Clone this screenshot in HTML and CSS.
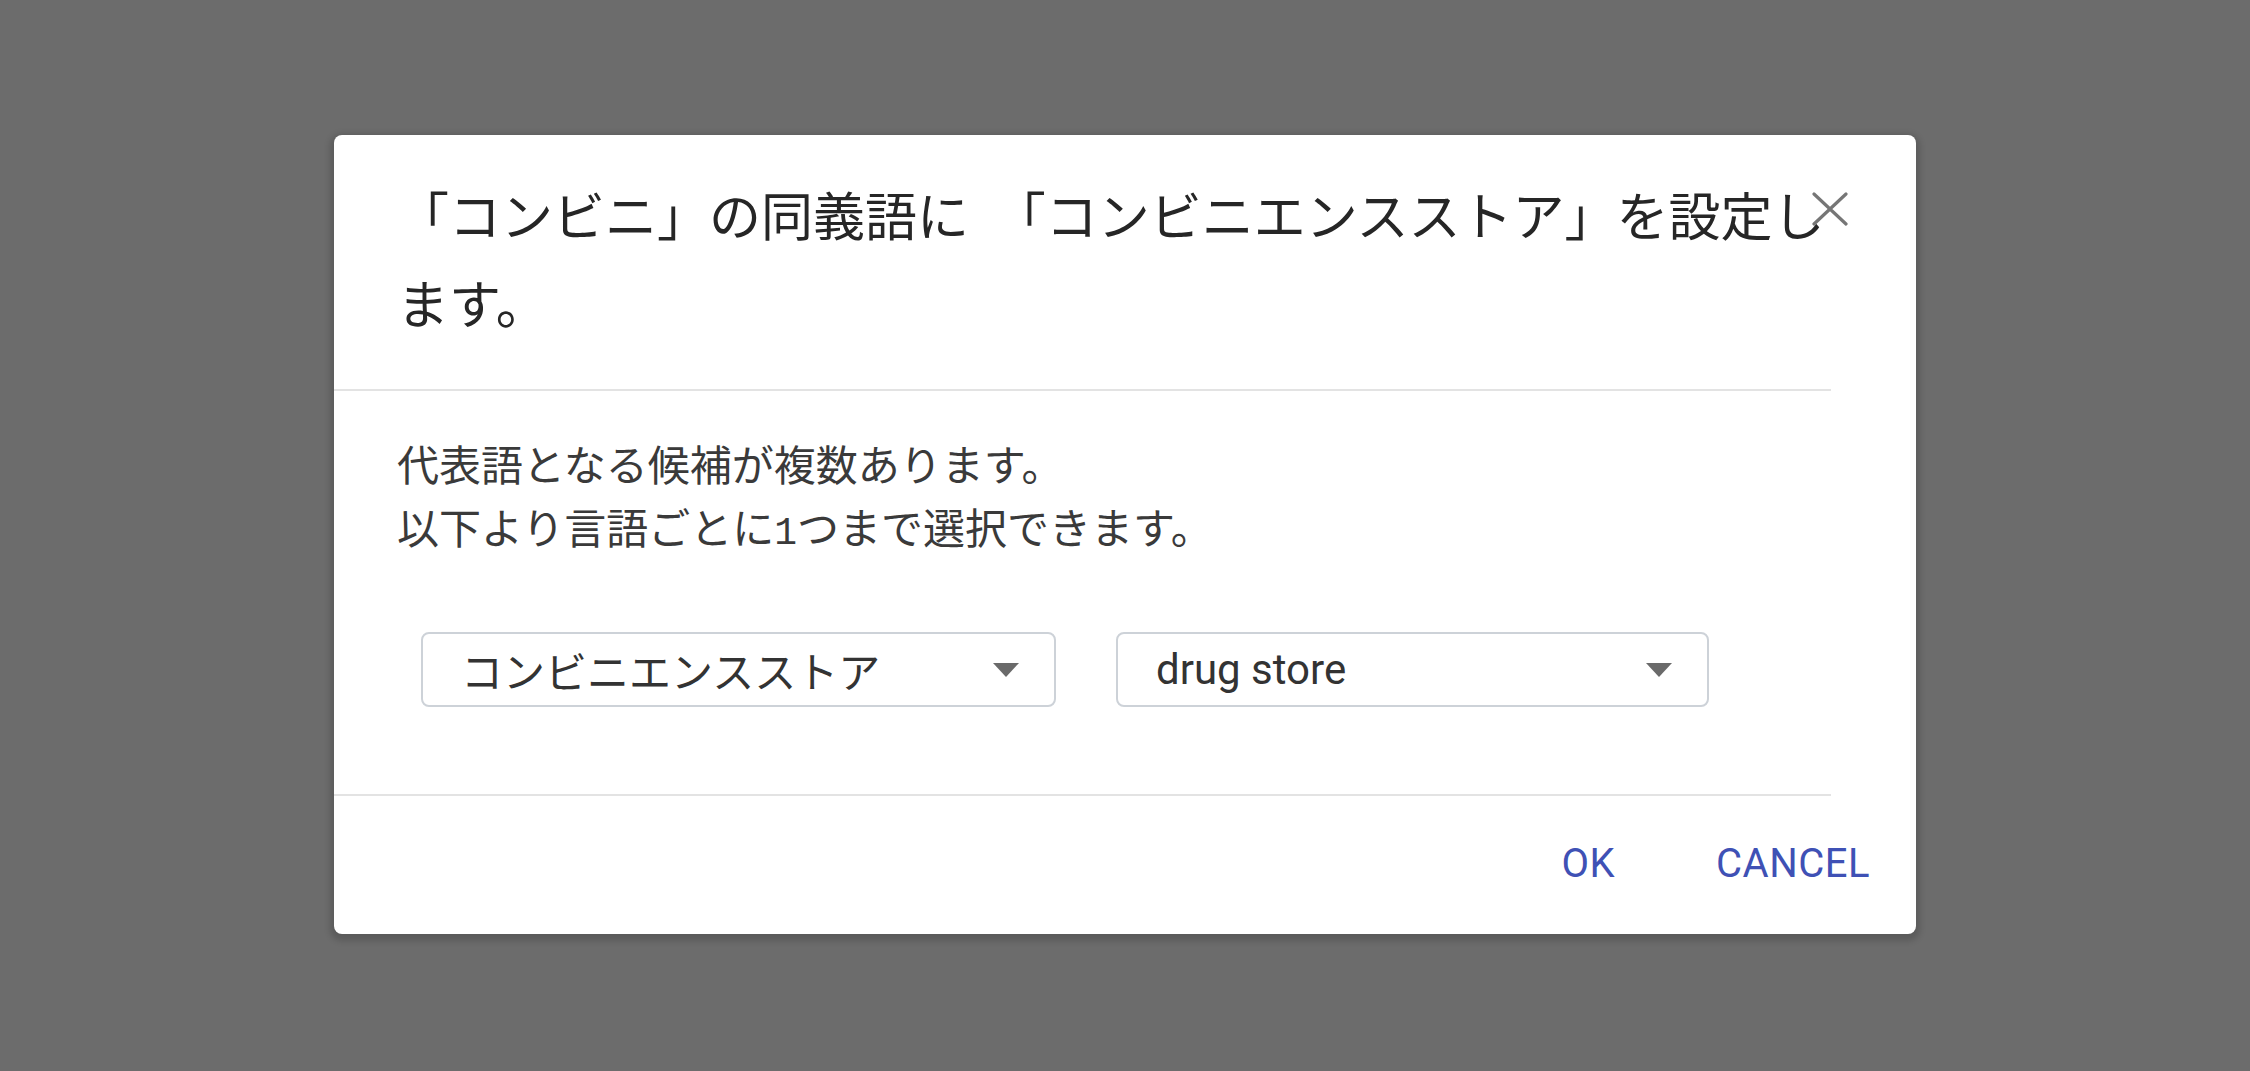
FILE: index.html
```html
<!DOCTYPE html>
<html lang="ja">
<head>
<meta charset="utf-8">
<title>同義語の設定</title>
<link rel="stylesheet" href="styles.css">
</head>
<body>
<div class="backdrop">
  <div class="dialog" role="dialog">
    <div class="dialog-header">
      <h2 class="dialog-title">「コンビニ」の同義語に 「コンビニエンスストア」を設定します。</h2>
      <button class="close-btn" aria-label="閉じる">
        <svg viewBox="0 0 36 34" width="36" height="34"><path d="M2 2 L34 32 M34 2 L2 32" stroke="#767676" stroke-width="3.2" stroke-linecap="round" fill="none"/></svg>
      </button>
    </div>
    <div class="divider"></div>
    <div class="dialog-body">
      <p class="message">代表語となる候補が複数あります。<br>以下より言語ごとに<span class="digit">1</span>つまで選択できます。</p>
      <div class="select-row">
        <div class="select select-ja"><span class="select-value">コンビニエンスストア</span><span class="caret"></span></div>
        <div class="select select-en"><span class="select-value">drug store</span><span class="caret"></span></div>
      </div>
    </div>
    <div class="divider"></div>
    <div class="dialog-footer">
      <button class="text-btn">OK</button>
      <button class="text-btn">CANCEL</button>
    </div>
  </div>
</div>
</body>
</html>
```
FILE: styles.css
```css
* { box-sizing: border-box; }
html, body {
  margin: 0;
  padding: 0;
  background: #6c6c6c;
  width: 2250px;
  height: 1071px;
  overflow: hidden;
}
.backdrop {
  padding: 135px 0 0 334px;
  height: 1071px;
}
.dialog {
  width: 1582px;
  background: #ffffff;
  border-radius: 8px;
  box-shadow: 0 3px 6px 4px rgba(0, 0, 0, 0.16);
  font-family: "Noto Sans CJK JP", sans-serif;
  display: flex;
  flex-direction: column;
}
.dialog-header {
  position: relative;
  padding: 35px 50px 43px 63px;
}
.dialog-title {
  margin: 0;
  font-size: 52px;
  line-height: 88px;
  font-weight: 400;
  word-spacing: 13px;
  color: #262626;
}
.close-btn {
  position: absolute;
  top: 57px;
  right: 68px;
  width: 36px;
  height: 34px;
  padding: 0;
  border: 0;
  background: transparent;
  display: block;
}
.close-btn svg { display: block; }
.divider {
  height: 2px;
  background: #e3e3e3;
  margin-right: 85px;
}
.dialog-body {
  padding: 40px 0 87px 63px;
}
.message {
  margin: 0;
  font-size: 42px;
  line-height: 63px;
  height: 126px;
  color: #3a3a3a;
}
.digit {
  font-family: "Liberation Mono", monospace;
  font-size: 38px;
  line-height: 1;
}
.select-row {
  display: flex;
  gap: 60px;
  margin-top: 75px;
  padding-left: 24px;
}
.select {
  display: flex;
  align-items: center;
  justify-content: space-between;
  height: 75px;
  border: 2px solid #cdd2d8;
  border-radius: 8px;
  padding: 0 35px 0 38px;
  font-size: 42px;
  color: #333333;
  background: #fff;
}
.select-ja { width: 635px; }
.select-en { width: 593px; font-family: Roboto, "Noto Sans CJK JP", sans-serif; }
.select-value { line-height: 1; }
.caret {
  width: 0;
  height: 0;
  border-left: 13px solid transparent;
  border-right: 13px solid transparent;
  border-top: 14px solid #6a6a6a;
}
.dialog-footer {
  display: flex;
  justify-content: flex-end;
  gap: 61px;
  padding: 44px 26px 46px 0;
}
.text-btn {
  font-family: Roboto, sans-serif;
  font-size: 40px;
  line-height: 48px;
  letter-spacing: 0.5px;
  color: #3f51b5;
  background: transparent;
  border: 0;
  padding: 0 20px;
  margin: 0;
}
```
